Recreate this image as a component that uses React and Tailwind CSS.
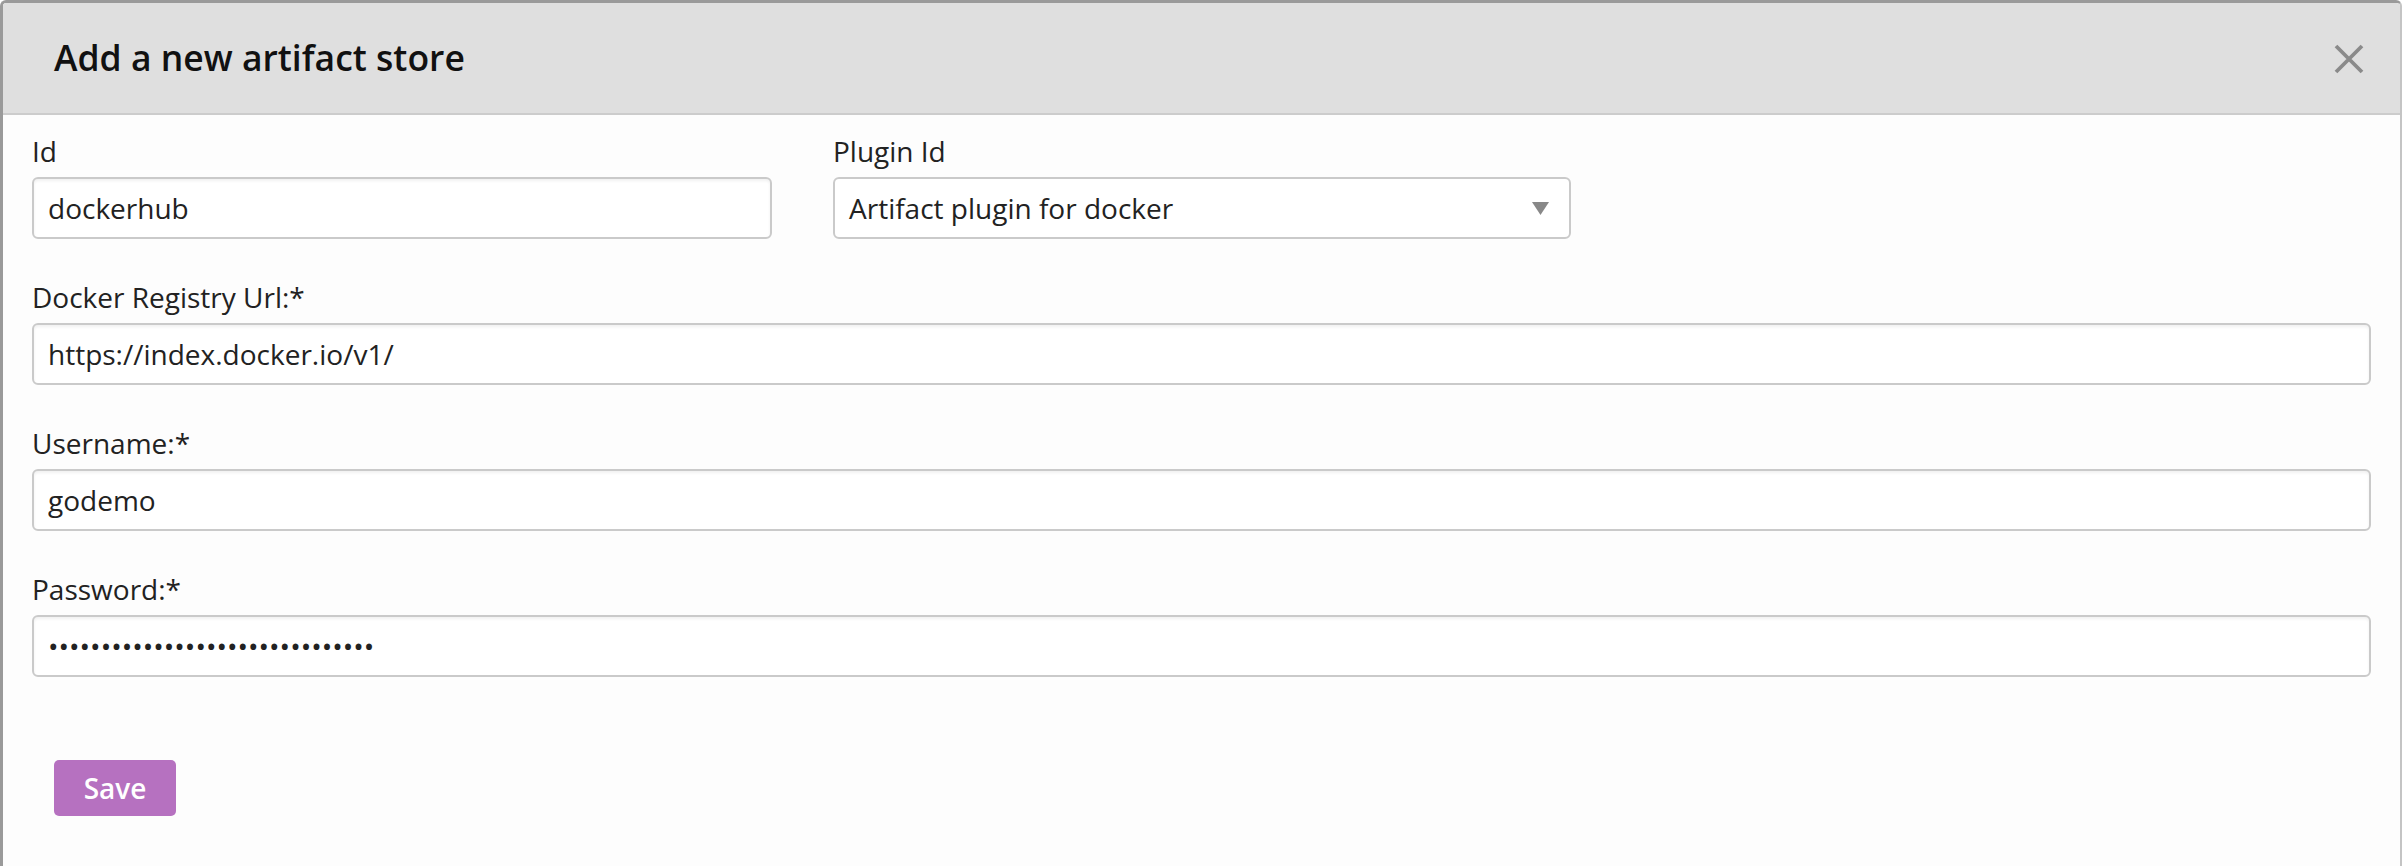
import React from "react";

const font = { fontFamily: "'Open Sans', 'Noto Sans', sans-serif" };

function Label({ children }) {
  return (
    <div className="h-[40px] leading-[40px] text-[28px] text-[#222] mb-[6px]">{children}</div>
  );
}

function TextInput({ value, type = "text", className = "" }) {
  return (
    <input
      type={type}
      readOnly
      defaultValue={value}
      style={font}
      className={`block h-[62px] border-2 border-[#cacaca] rounded-[6px] bg-white px-[14px] text-[28px] text-[#222] outline-none shadow-[inset_0_2px_3px_rgba(0,0,0,0.06)] ${className}`}
    />
  );
}

export default function App() {
  return (
    <div
      style={font}
      className="w-[2402px] h-[866px] overflow-hidden bg-[#fdfdfd] border-l-[3px] border-t-[3px] border-r-2 border-l-[#9a9a9a] border-t-[#9a9a9a] border-r-[#c4c4c4] rounded-tl-[6px] rounded-tr-[6px] flex flex-col"
    >
      <div className="h-[112px] shrink-0 bg-[#dfdfdf] border-b-2 border-[#cccccc] flex items-center justify-between pl-[51px] pr-[36px]">
        <h2 className="text-[35.5px] font-semibold text-[#111] leading-none">
          Add a new artifact store
        </h2>
        <svg width="30" height="30" viewBox="0 0 30 30" className="mt-[1px]">
          <path d="M2 2 L28 28 M28 2 L2 28" stroke="#8a8a8a" strokeWidth="3.8" strokeLinecap="butt" />
        </svg>
      </div>

      <div className="px-[29px] pt-[16px] flex flex-col">
        <div className="flex gap-[61px]">
          <div className="w-[740px]">
            <Label>Id</Label>
            <TextInput value="dockerhub" className="w-full" />
          </div>
          <div className="w-[738px]">
            <Label>Plugin Id</Label>
            <div className="h-[62px] border-2 border-[#cacaca] rounded-[6px] bg-white pl-[14px] pr-[20px] flex items-center justify-between text-[28px] text-[#222]">
              <span>Artifact plugin for docker</span>
              <svg width="17" height="13" viewBox="0 0 17 13">
                <path d="M0 0 L17 0 L8.5 13 Z" fill="#888888" />
              </svg>
            </div>
          </div>
        </div>

        <div className="mt-[38px]">
          <Label>Docker Registry Url:*</Label>
          <TextInput value="https://index.docker.io/v1/" className="w-full" />
        </div>
        <div className="mt-[38px]">
          <Label>Username:*</Label>
          <TextInput value="godemo" className="w-full" />
        </div>
        <div className="mt-[38px]">
          <Label>Password:*</Label>
          <TextInput type="password" value="abcdefghijklmnopqrstuvwxyz12345" className="w-full" />
        </div>

        <div className="mt-[83px] pl-[22px]">
          <button className="w-[122px] h-[56px] rounded-[5px] bg-[#b671c0] text-white text-[28px] font-semibold leading-none flex items-center justify-center">
            Save
          </button>
        </div>
      </div>
    </div>
  );
}
